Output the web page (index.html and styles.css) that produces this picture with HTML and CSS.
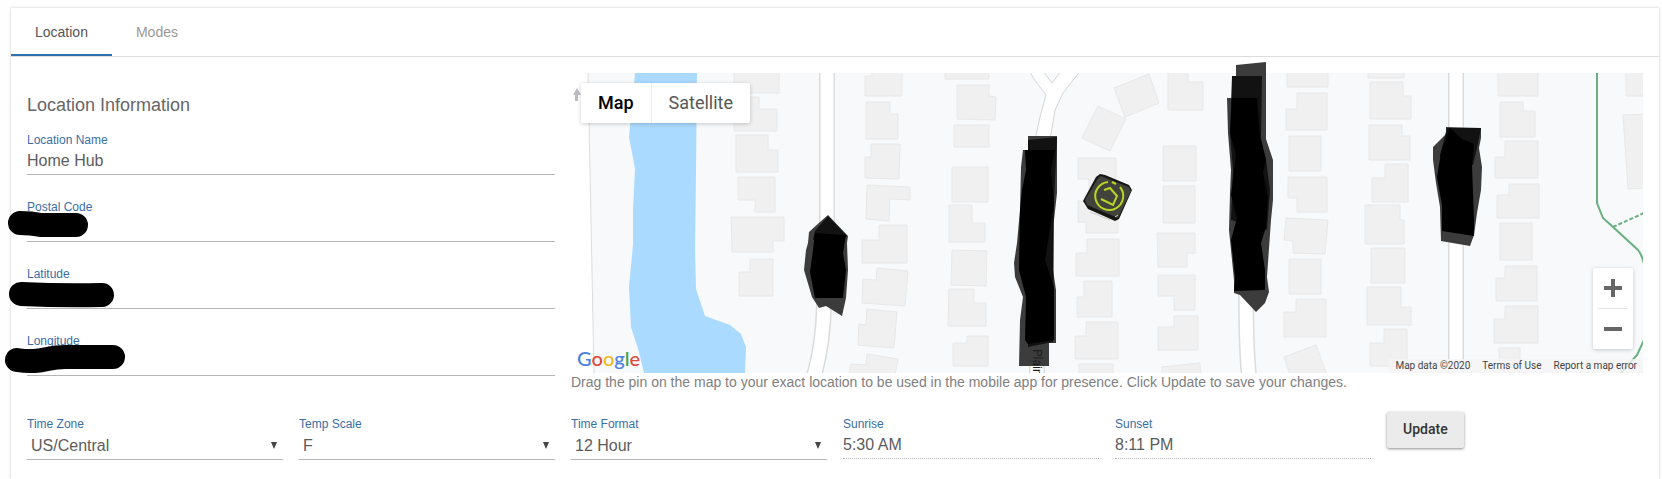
FILE: index.html
```
<!DOCTYPE html>
<html lang="en">
<head>
    <meta charset="UTF-8">
    <meta name="viewport" content="width=device-width, initial-scale=1.0">
    <title>Location</title>
    <link rel="stylesheet" href="styles.css">
</head>
<body>
    <main class="card">
        <nav class="tabs">
            <a class="tab active" href="#location">Location</a>
            <a class="tab" href="#modes">Modes</a>
        </nav>

        <form class="panel" id="location">
            <div class="grid">
                <section class="info">
                    <h1>Location Information</h1>
                    <div class="fields">
                        <div class="field">
                            <label for="name">Location Name</label>
                            <input type="text" id="name" value="Home Hub">
                        </div>
                        <div class="field">
                            <label for="postal">Postal Code</label>
                            <input type="text" id="postal">
                            <svg class="scribble" width="124" height="34" viewBox="0 0 124 34"><path d="M17 15Q28 15 38 17H73"/></svg>
                        </div>
                        <div class="field">
                            <label for="latitude">Latitude</label>
                            <input type="text" id="latitude">
                            <svg class="scribble" width="124" height="34" viewBox="0 0 124 34"><path d="M18 19Q60 21 99 20"/></svg>
                        </div>
                        <div class="field">
                            <label for="longitude">Longitude</label>
                            <input type="text" id="longitude">
                            <svg class="scribble" width="124" height="34" viewBox="0 0 124 34"><path d="M14 18C40 22 42 14 66 15H110"/></svg>
                        </div>
                    </div>
                </section>

                <section class="map-column">
                    <div class="map">
                        <svg class="map-art" viewBox="571 73 1072 300" preserveAspectRatio="xMinYMin slice">
                            <clipPath id="frame"><rect x="571" y="73" width="1072" height="300"/></clipPath>
                            <g clip-path="url(#frame)">
                                <path class="land" d="M588 72L591 220L594 374H1644V72Z"/>
                                <path class="water" d="M635 73L629 137L635 169L633 210V245L629 287L631 327L639 352L644 373H745L746 347L741 334L730 325L705 316L696 289L695 250L696 170L697 73Z"/>

                                <!-- roads -->
                                <path class="road-edge" d="M827 70V230Q828 290 824 305Q823 345 814 376M1037 350V376M1246 280Q1246 350 1249 376M1456 70V376"/>
                                <path class="road" d="M827 70V230Q828 290 824 305Q823 345 814 376M1037 350V376M1246 280Q1246 350 1249 376M1456 70V376"/>
                                <path class="junction" d="M1029 70L1034 79L1046 95L1040 117L1035 140H1050L1055 110L1063 93L1081 70H1062L1052 83L1042 70Z"/>

                                <!-- houses -->
                                <g class="house">
                                    <path d="M734 71H779V93H734ZM734 97H759V109H777V131H734ZM736 135H768V150H778V172H736ZM738 177H775V212H755V200H738ZM731 217H784V241H773V252H732ZM750 259H773V296H739V272H750Z"/>
                                    <path d="M872 71H902V96H865V76H872ZM866 102H890V114H898V139H866ZM871 144H900L899 179L865 178V157H871ZM867 185L910 187V200L890 199L889 221L866 219ZM879 225H907V263H862V240H879ZM877 268L908 271L905 306L862 303L863 279L876 280ZM867 309L897 312L894 348L858 345L859 324L866 325ZM867 354L898 359L895 375H849L851 364L866 365Z"/>
                                    <path d="M945 71H989V79H945ZM957 85H989V96L996 97L995 120L957 119ZM954 125H989V147H954ZM952 167H988V202H952ZM949 205H972V223H985V242H949ZM952 250L987 251L986 286L951 285ZM949 289H974V303H986V326H948ZM967 336H988V366H953V343H967Z"/>
                                    <path d="M1114 88L1149 74L1159 103L1125 117ZM1098 106L1126 119L1110 151L1082 138ZM1078 158H1116V190H1089V179H1078ZM1078 201H1118V233H1086V222H1078ZM1087 239H1119V276H1076V253H1087ZM1084 281H1112V317H1077V297H1084ZM1086 322H1118V359H1075V336H1086ZM1079 364H1113V375H1079Z"/>
                                    <path d="M1168 71H1188V82H1203V110H1168ZM1163 146H1196V181H1163ZM1163 186H1195V223H1163ZM1157 233H1195V253H1187V267H1158ZM1158 275H1195V310H1174V296H1158ZM1174 316H1198V350H1158V327H1174ZM1162 367L1200 363L1201 375H1162Z"/>
                                    <path d="M1287 71H1328V87H1287ZM1297 93H1327V130H1286V109H1297ZM1289 136H1321V171H1289ZM1288 177H1327V212H1297V198H1288ZM1286 218L1328 220L1325 254L1293 253V241L1284 240ZM1289 259H1321V294H1289ZM1296 299H1326V337H1284V312H1296ZM1284 357L1316 345L1327 375H1290Z"/>
                                    <path d="M1368 71H1404V78H1368ZM1370 82H1403V96H1411V119H1370ZM1369 125H1402V136H1410V160H1369ZM1385 164H1408V202H1372V178H1385ZM1365 205H1400V220H1404V244H1365ZM1371 248H1405V283H1371ZM1367 287H1401V307H1411V325H1367ZM1384 329H1407V366H1370V343H1384Z"/>
                                    <path d="M1498 71H1538V96H1498ZM1500 102H1523V111H1535V137H1500ZM1505 141H1538V178H1495V157H1505ZM1509 184H1539V218H1497V195H1509ZM1500 223H1532V260H1500ZM1505 266H1537V301H1496V278H1505ZM1505 306H1538V343H1494V319H1505ZM1499 348H1520V375H1499ZM1626 71H1645V96H1626ZM1623 115L1645 114V188L1628 189Z"/>
                                </g>

                                <!-- walking trail -->
                                <path class="trail" d="M1597 72V203L1603 218L1613 227L1638 250Q1642 255 1644 264M1644 340L1637 355L1620 374"/>
                                <path class="trail dashed" d="M1613 227L1644 213"/>
                                <path class="arrow" d="M577 88L581 95H578V101H575V95H573Z"/>
                            </g>

                            <!-- marker strokes over the street names -->
                            <g class="marker">
                                <path d="M828 215L848 236L847 243L848 270L846 298L842 316L826 306L819 308L812 297L804 270L806 250L808 243L809 232L820 222Z"/>
                                <path d="M1028 136H1057V193L1054 220L1050 230L1052 263L1056 290V343H1049V366H1019L1020 320L1023 297L1015 277L1014 263L1017 243L1020 210L1021 167L1023 150H1028Z"/>
                                <path d="M1236 65L1266 62V139L1273 160V200L1271 220L1267 277L1269 292L1265 303L1256 312L1240 295L1234 293V280L1229 230L1230 193L1231 170L1228 133L1227 98H1232V76H1236Z"/>
                                <path d="M1446 127L1481 128V138L1479 148L1482 167L1481 190L1477 213L1474 235L1470 246L1441 241L1440 207L1436 183L1433 160V147L1446 134Z"/>
                            </g>
                            <g class="marker mid">
                                <path d="M828 216L847 236L843 240H813L815 231Z"/>
                                <path d="M1028 140L1057 137L1056 160L1054 200L1053 342L1028 347Z"/>
                                <path d="M1232 76H1262L1261 138L1266 160L1270 190L1267 230L1231 220L1233 170L1230 133Z"/>
                                <path d="M1447 128H1481L1477 148L1473 165H1441L1440 155Z"/>
                            </g>
                            <g class="marker solid">
                                <path d="M815 233L846 235L843 253L846 270L843 298H815L810 272L813 250Z"/>
                                <path d="M1025 150H1055L1051 170L1054 203L1051 222L1045 260L1054 287V340L1028 344L1025 340L1026 297L1019 270L1020 210L1022 190L1026 170Z"/>
                                <path d="M1232 98H1257L1260 137L1266 160L1263 173L1268 197L1266 227L1261 243L1265 270V290L1234 291L1235 277L1231 240L1237 218L1231 195L1236 155L1230 133Z"/>
                                <path d="M1450 128L1462 139L1474 144L1472 165L1474 220V236L1442 231V205L1437 177L1441 153Z"/>
                            </g>
                            <g clip-path="url(#frame)">
                                <text class="street" transform="translate(1033 349) rotate(90)">Plain</text>
                            </g>

                            <!-- hub pin -->
                            <g class="pin">
                                <path class="pin-edge" d="M1100 174L1105 175L1129 185L1132 190L1119 219L1115 221L1088 209L1083 201L1096 177Z"/>
                                <path class="pin-face" d="M1101 176L1129 187L1131 191L1118 218L1087 205L1085 200L1098 178Z"/>
                                <path class="pin-ring" d="M1108 182A14 14 0 1 0 1120 187M1116 184L1112 182"/>
                                <path class="pin-ring" d="M1104 190L1110 188L1117 196L1113 205L1101 199"/>
                                <path class="pin-shine" d="M1090 212L1110 220M1115 217L1118 215"/>
                            </g>
                        </svg>

                        <div class="map-type">
                            <button type="button" class="selected">Map</button>
                            <button type="button">Satellite</button>
                        </div>
                        <div class="zoom">
                            <button type="button" aria-label="Zoom in"><svg width="18" height="18" viewBox="0 0 18 18"><path d="M7 0H11V7H18V11H11V18H7V11H0V7H7Z"/></svg></button>
                            <button type="button" aria-label="Zoom out"><svg width="18" height="18" viewBox="0 0 18 18"><path d="M0 7H18V11H0Z"/></svg></button>
                        </div>
                        <a class="google" href="#google"><span class="blue">G</span><span class="red">o</span><span class="yellow">o</span><span class="blue">g</span><span class="green">l</span><span class="red">e</span></a>
                        <div class="credits">
                            <span>Map data ©2020</span>
                            <a href="#terms">Terms of Use</a>
                            <a href="#report">Report a map error</a>
                        </div>
                    </div>
                    <p class="hint">Drag the pin on the map to your exact location to be used in the mobile app for presence. Click Update to save your changes.</p>
                </section>
            </div>

            <div class="grid settings">
                <div class="field">
                    <label for="zone">Time Zone</label>
                    <select id="zone"><option>US/Central</option></select>
                </div>
                <div class="field">
                    <label for="scale">Temp Scale</label>
                    <select id="scale"><option>F</option></select>
                </div>
                <div class="field">
                    <label for="format">Time Format</label>
                    <select id="format"><option>12 Hour</option></select>
                </div>
                <div class="field">
                    <label for="sunrise">Sunrise</label>
                    <input type="text" id="sunrise" value="5:30 AM" disabled>
                </div>
                <div class="field">
                    <label for="sunset">Sunset</label>
                    <input type="text" id="sunset" value="8:11 PM" disabled>
                </div>
                <button type="submit" class="update">Update</button>
            </div>
        </form>
    </main>
</body>
</html>
```
FILE: styles.css
```
* {
    box-sizing: border-box;
}

body {
    margin: 0;
    padding: 8px 3px 0 11px;
    background-color: #fefefe;
    color: #555;
    font-family: "Liberation Sans", Arial, sans-serif;
}

.card {
    min-height: calc(100vh - 8px);
    background: #fff;
    box-shadow: 0 0 3px rgba(0, 0, 0, 0.2);
}

.tabs {
    display: flex;
    height: 49px;
    border-bottom: 1px solid #dcdcdc;
}

.tab {
    padding: 14px 24px 0;
    border-bottom: 2px solid transparent;
    color: #999;
    font-size: 14px;
    line-height: 20px;
    text-decoration: none;
}

.tab.active {
    border-color: #2f6fae;
    color: #555;
}

.panel {
    padding: 16px 16px 0;
}

.grid {
    display: grid;
    grid-template-columns: repeat(6, 1fr);
    gap: 16px;
}

.info {
    grid-column: span 2;
    padding-top: 20px;
}

h1 {
    margin: 0 0 15px;
    color: #666;
    font-size: 18px;
    font-weight: normal;
    line-height: 24px;
}

.fields {
    display: flex;
    flex-direction: column;
    gap: 24px;
}

.field {
    display: flex;
    flex-direction: column;
    position: relative;
}

label {
    color: #3a6ea5;
    font-size: 12px;
    line-height: 16px;
}

input,
select {
    width: 100%;
    height: 27px;
    padding: 0;
    border: 0;
    border-bottom: 1px solid #b5b5b5;
    border-radius: 0;
    outline: none;
    background: transparent;
    color: #5c5c5c;
    font-family: inherit;
    font-size: 16px;
}

input:disabled {
    border-bottom-style: dotted;
}

select {
    height: 28px;
    padding: 0 4px;
    appearance: none;
    background: url("data:image/svg+xml,%3Csvg xmlns='http://www.w3.org/2000/svg' width='6' height='7'%3E%3Cpath d='M0 0H6L3 7Z' fill='%23444'/%3E%3C/svg%3E") no-repeat right 6px center;
}

.scribble {
    position: absolute;
    top: 9px;
    left: -24px;
    fill: none;
    stroke: #000;
    stroke-width: 24;
    stroke-linecap: round;
    overflow: visible;
}

/* map */
.map-column {
    grid-column: span 4;
}

.map {
    position: relative;
    height: 300px;
    font-family: Roboto, sans-serif;
}

.map-art {
    display: block;
    width: 100%;
    height: 100%;
    overflow: visible;
}

.land {
    fill: #f7f9fb;
    stroke: #dcdcde;
}

.water {
    fill: #aadaff;
}

.road-edge {
    fill: none;
    stroke: #dadbdd;
    stroke-width: 16;
}

.road {
    fill: none;
    stroke: #fff;
    stroke-width: 13;
}

.junction {
    fill: #fff;
    stroke: #d4d5d8;
}

.house {
    fill: #f0f0f0;
    stroke: #e8e8e8;
}

.trail {
    fill: none;
    stroke: #68b07f;
    stroke-width: 2;
}

.dashed {
    stroke-dasharray: 4 2;
}

.arrow {
    fill: #bbbcc2;
}

.street {
    font-size: 12px;
    fill: #1c1c1c;
}

.marker {
    fill: #3c3c3c;
}

.mid {
    fill: #121212;
}

.solid {
    fill: #000;
}

.pin-edge {
    fill: #151613;
}

.pin-face {
    fill: #42433d;
}

.pin-ring {
    fill: none;
    stroke: #b9d622;
    stroke-width: 2;
}

.pin-shine {
    stroke: #ccc;
}

.map-type {
    display: flex;
    position: absolute;
    top: 10px;
    left: 10px;
    height: 40px;
    border-radius: 2px;
    background: #fff;
    box-shadow: 0 1px 4px rgba(0, 0, 0, 0.2);
}

.map-type button {
    padding: 0 17px 2px;
    border: 0;
    background: none;
    color: #565656;
    font-family: inherit;
    font-size: 18px;
}

.map-type .selected {
    border-right: 1px solid #eee;
    color: #000;
    font-weight: 500;
}

.zoom {
    display: flex;
    flex-direction: column;
    position: absolute;
    right: 10px;
    bottom: 24px;
    width: 40px;
    border-radius: 2px;
    background: #fff;
    box-shadow: 0 1px 4px rgba(0, 0, 0, 0.2);
}

.zoom button {
    display: flex;
    align-items: center;
    justify-content: center;
    height: 40px;
    margin: 0 5px;
    padding: 0;
    border: 0;
    background: none;
}

.zoom button + button {
    height: 41px;
    border-top: 1px solid #e6e6e6;
}

.zoom svg {
    fill: #666;
}

.google {
    position: absolute;
    bottom: 1px;
    left: 6px;
    font-family: Lato, sans-serif;
    font-size: 20px;
    font-weight: 500;
    line-height: 28px;
    text-decoration: none;
}

.blue {
    color: #4a80e0;
}

.red {
    color: #dc4a3e;
}

.yellow {
    color: #f0b919;
}

.green {
    color: #35a355;
}

.credits {
    display: flex;
    gap: 12px;
    position: absolute;
    right: 0;
    bottom: 0;
    padding: 0 6px;
    background: rgba(245, 245, 245, 0.8);
    color: #444;
    font-size: 10px;
    line-height: 14px;
}

.credits a {
    color: inherit;
    text-decoration: none;
}

.hint {
    margin: 0;
    color: #808080;
    font-size: 14px;
    line-height: 18px;
}

/* bottom row */
.settings {
    margin-top: 21px;
    align-items: start;
}

.settings .field {
    padding-top: 4px;
}

.update {
    justify-self: start;
    height: 36px;
    padding: 0 16px 2px;
    border: 0;
    border-radius: 2px;
    background: #ebebeb;
    box-shadow: 0 1px 3px rgba(0, 0, 0, 0.45);
    color: #333;
    font-family: Roboto, sans-serif;
    font-size: 14px;
    font-weight: 500;
}
```
